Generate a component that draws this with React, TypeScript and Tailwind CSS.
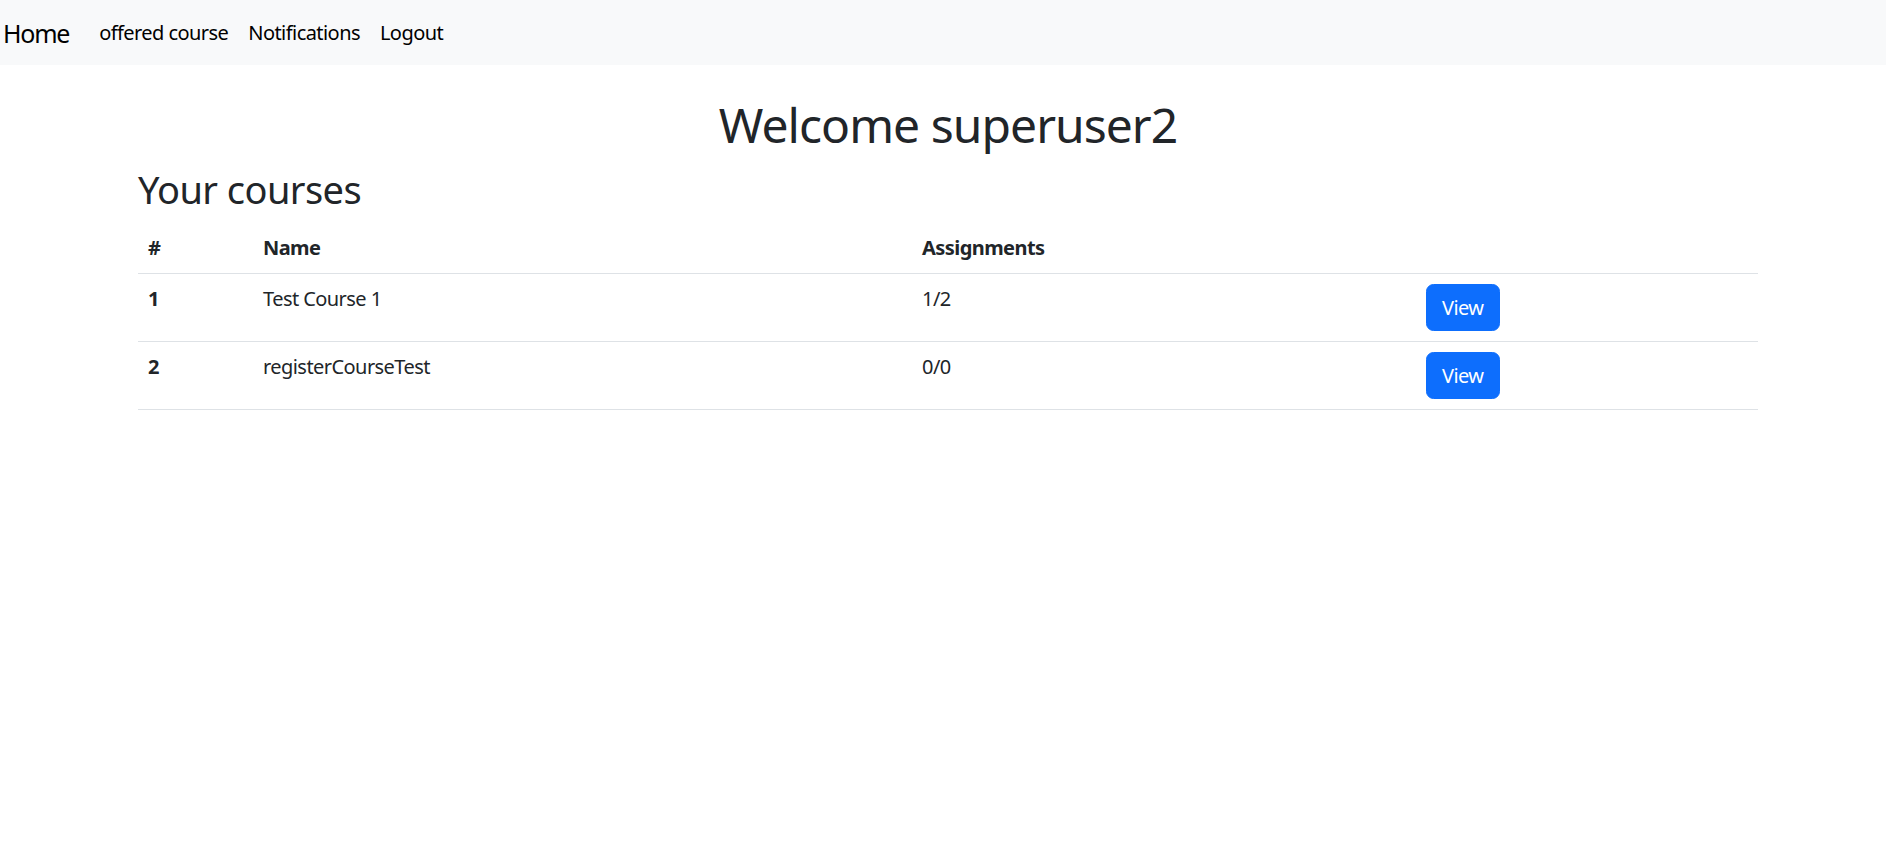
const courses = [
  { id: 1, name: 'Test Course 1', assignments: '1/2' },
  { id: 2, name: 'registerCourseTest', assignments: '0/0' },
];

const font = "font-['Segoe_UI','Noto_Sans','Liberation_Sans',sans-serif]";

export default function App() {
  return (
    <div className={`${font} min-h-[846px] bg-white text-[#212529] tracking-[-0.035em]`}>
      {/* Navbar */}
      <nav className="flex h-[65px] items-center bg-[#f8f9fa] pl-[3px]">
        <a className="mr-[20px] text-[25px] leading-[38px] text-black tracking-[-0.05em]">Home</a>
        <ul className="flex items-center">
          {['offered course', 'Notifications', 'Logout'].map((l) => (
            <li key={l}>
              <a className="block px-[10px] text-[20px] leading-[30px] text-black">{l}</a>
            </li>
          ))}
        </ul>
      </nav>

      <div className="pl-[10px]">
        <div className="mx-auto w-[1650px] px-[15px]">
          <h1 className="mt-[30px] mb-[10px] text-center text-[48px] leading-[60px] font-normal tracking-[-0.02em]">
            Welcome superuser2
          </h1>
          <h2 className="mb-[10px] text-[38px] leading-[48px] font-normal tracking-[-0.015em]">Your courses</h2>

          <table className="w-full table-fixed border-collapse text-left text-[20px] leading-[30px]">
            <colgroup>
              <col className="w-[115px]" />
              <col className="w-[659px]" />
              <col className="w-[504px]" />
              <col />
            </colgroup>
            <thead>
              <tr className="border-b border-[#dee2e6]">
                <th className="p-[10px] align-top font-bold">#</th>
                <th className="p-[10px] align-top font-bold">Name</th>
                <th className="p-[10px] align-top font-bold">Assignments</th>
                <th className="p-[10px]"></th>
              </tr>
            </thead>
            <tbody>
              {courses.map((c) => (
                <tr key={c.id} className="border-b border-[#dee2e6]">
                  <th className="p-[10px] align-top font-bold">{c.id}</th>
                  <td className="p-[10px] align-top">{c.name}</td>
                  <td className="p-[10px] align-top">{c.assignments}</td>
                  <td className="p-[10px] align-top">
                    <button className="rounded-[7.5px] border border-[#0d6efd] bg-[#0d6efd] px-[15px] py-[7.5px] text-[20px] leading-[30px] text-white">
                      View
                    </button>
                  </td>
                </tr>
              ))}
            </tbody>
          </table>
        </div>
      </div>
    </div>
  );
}
